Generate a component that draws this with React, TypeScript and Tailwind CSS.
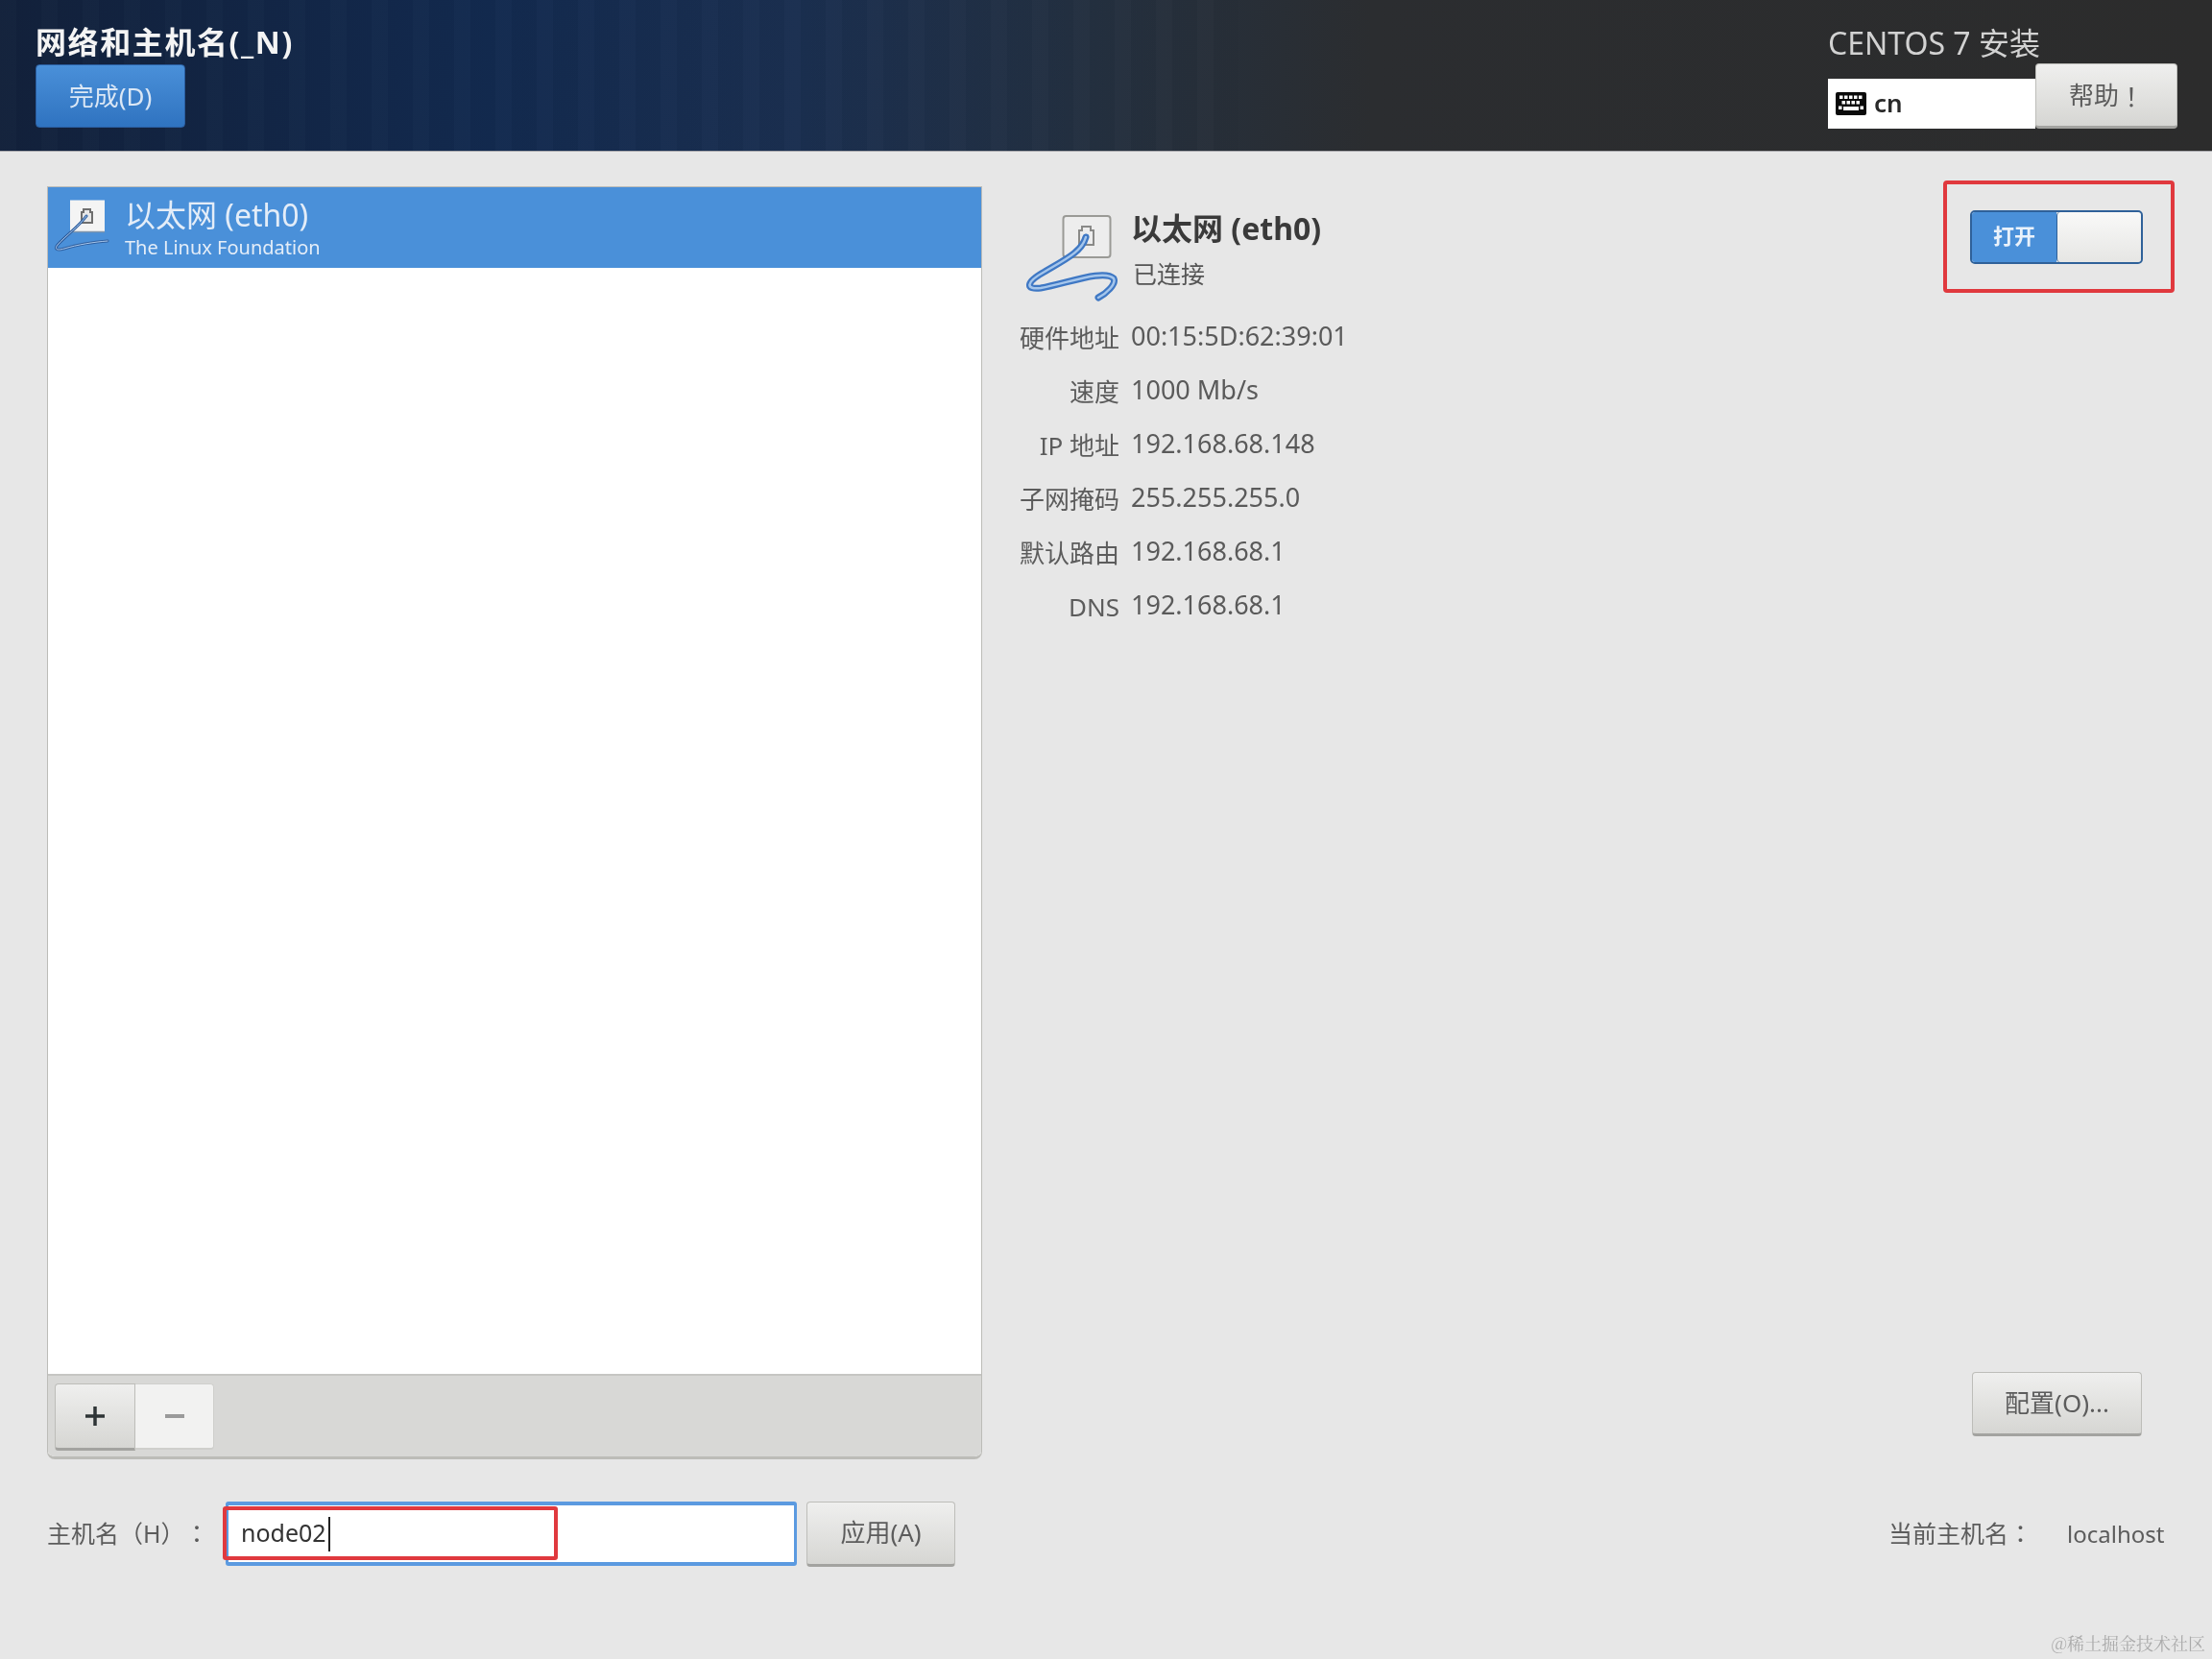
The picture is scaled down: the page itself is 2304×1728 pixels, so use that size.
import React from "react";

const font = "[font-family:'Noto_Sans','Noto_Sans_CJK_SC',sans-serif] [text-spacing-trim:space-all]";
const centered = "[font-family:'Noto_Sans_CJK_TC',sans-serif]";

function PortIcon({ large }: { large?: boolean }) {
  if (large) {
    const cable = "M69 37 C 65 52, 48 60, 26 73 C 6 84, 6 92, 22 90 C 50 85, 88 70, 98 80 C 101 86, 90 96, 82 100";
    return (
      <svg width="110" height="104" viewBox="0 0 110 104" className="mt-[16px] shrink-0">
        <rect x="45.5" y="15" width="49" height="43" rx="3" fill="#ededed" stroke="#9a9a96" strokeWidth="2" />
        <path d="M62 30 h3 v-4 h9 v4 h3 v15 h-15 z" fill="none" stroke="#8a8a88" strokeWidth="2" />
        <path d={cable} fill="none" stroke="#3f78c4" strokeWidth="7" strokeLinecap="round" />
        <path d={cable} fill="none" stroke="#a5c6ec" strokeWidth="2.5" strokeLinecap="round" />
      </svg>
    );
  }
  const cable = "M40 17 C 33 27, 18 38, 10 47 C 6 52, 10 53, 17 51 C 30 47, 48 44, 62 43";
  return (
    <svg width="76" height="60" viewBox="0 0 76 60" className="shrink-0">
      <rect x="23" y="0.5" width="36" height="33" fill="#f4f4f4" />
      <path d="M23 33.5 h36" stroke="#7f95ad" strokeWidth="1.5" />
      <path d="M35 13 h2 v-3 h7 v3 h2 v11 h-11 z" fill="#e8e8e8" stroke="#6f6f6f" strokeWidth="2" />
      <path d={cable} fill="none" stroke="#2f5f9f" strokeWidth="3" strokeLinecap="round" />
      <path d={cable} fill="none" stroke="#a9c8ec" strokeWidth="1" strokeLinecap="round" />
    </svg>
  );
}

function KeyboardIcon() {
  const top = [0, 1, 2, 3, 4];
  const mid = [0, 1, 2, 3];
  return (
    <svg width="32" height="24" viewBox="0 0 32 24" className="shrink-0">
      <rect width="32" height="24" rx="2" fill="#0a0a0a" />
      {top.map((i) => (
        <rect key={`t${i}`} x={4 + i * 5} y="3.5" width="3.5" height="3.5" fill="#fff" />
      ))}
      {mid.map((i) => (
        <rect key={`m${i}`} x={6.5 + i * 5} y="9" width="3.5" height="3.5" fill="#fff" />
      ))}
      <rect x="3" y="14.5" width="3.5" height="3.5" fill="#fff" />
      <rect x="25.5" y="14.5" width="3.5" height="3.5" fill="#fff" />
      <rect x="8" y="15" width="16" height="4" fill="#fff" />
    </svg>
  );
}

const grayBtn =
  "flex items-center justify-center rounded-[4px] border border-[#bdbdb9] border-b-[3px] border-b-[#a3a3a0] bg-gradient-to-b from-[#efefee] to-[#d6d6d3] text-[#5c5c5c]";

const rows: [string, string][] = [
  ["硬件地址", "00:15:5D:62:39:01"],
  ["速度", "1000 Mb/s"],
  ["IP 地址", "192.168.68.148"],
  ["子网掩码", "255.255.255.0"],
  ["默认路由", "192.168.68.1"],
  ["DNS", "192.168.68.1"],
];

export default function App() {
  return (
    <div className={`relative flex h-[1728px] w-[2304px] flex-col overflow-hidden bg-[#e7e7e7] blur-[0.7px] ${font}`}>
      <header className="flex h-[158px] shrink-0 justify-between border-b border-b-[#a9a9ad] bg-[repeating-linear-gradient(90deg,rgba(255,255,255,0.01)_0px,rgba(255,255,255,0.01)_17px,rgba(0,0,0,0.018)_17px,rgba(0,0,0,0.018)_43px),linear-gradient(90deg,#12213b_0%,#122a4f_22%,#1a2f50_36%,#24303f_50%,#2b2d30_62%,#2c2c2c_100%)] bg-no-repeat [background-size:1290px_100%,100%_100%] pl-[37px] pr-[36px]">
        <div className="flex flex-col">
          <div className="mt-[24px] h-[43px] text-[32px] font-bold leading-[40px] tracking-[1.6px] text-[#f4f4f4]">网络和主机名(_N)</div>
          <button className="flex h-[66px] w-[156px] items-center justify-center rounded-[4px] border border-[#2a5d9f] bg-gradient-to-b from-[#4a90d9] to-[#2f73c0] text-[26px] text-[#dbe7f5]">完成(D)</button>
        </div>
        <div className="flex w-[364px] flex-col">
          <div className="mt-[25px] h-[41px] whitespace-nowrap text-[32px] leading-[40px] text-[#d2d2d2]">CENTOS 7 安装</div>
          <div className="flex items-end">
            <div className="flex h-[52px] w-[216px] items-center gap-[8px] bg-white pl-[8px]">
              <KeyboardIcon />
              <span className="mt-[-2px] text-[26px] font-semibold leading-none text-[#2a2a2a]">cn</span>
            </div>
            <button className={`${grayBtn} h-[68px] w-[148px] pt-[1px] text-[26px]`}>帮助<span className={centered}>！</span></button>
          </div>
        </div>
      </header>

      <main className="flex flex-1 pl-[49px] pt-[36px]">
        <div className="flex w-[974px] shrink-0 flex-col">
          <div className="flex h-[1326px] flex-col overflow-hidden rounded-b-[8px] border border-[#bcbcb8] border-b-[3px] bg-white">
            <div className="flex h-[84px] shrink-0 items-center bg-[#4a90d9] pt-[2px]">
              <PortIcon />
              <div className="ml-[4px] flex flex-col pb-[1px]">
                <span className="text-[32px] leading-[41px] text-[#e4edf8]">以太网 (eth0)</span>
                <span className="text-[20px] leading-[28px] text-[#e4edf8]">The Linux Foundation</span>
              </div>
            </div>
            <div className="flex-1" />
            <div className="flex h-[86px] shrink-0 items-start border-t-2 border-t-[#c6c6c3] bg-[#d8d8d6] pl-[7px] pt-[8px]">
              <button className={`${grayBtn} h-[70px] w-[84px] rounded-r-none text-[#2e3436]`}>
                <svg width="20" height="20" viewBox="0 0 20 20"><path d="M10 0v20M0 10h20" stroke="#2e3436" strokeWidth="3.5" /></svg>
              </button>
              <button className="flex h-[69px] w-[82px] items-center justify-center rounded-r-[4px] border border-l-0 border-[#cfcfcc] border-b-[2px] bg-[#f2f2f1]">
                <svg width="20" height="6" viewBox="0 0 20 6"><path d="M0 3h20" stroke="#9a9a9a" strokeWidth="4" /></svg>
              </button>
            </div>
          </div>

          <div className="mt-[44px] flex h-[67px] items-center pr-[28px]">
            <span className="w-[186px] shrink-0 whitespace-nowrap text-[25px] text-[#5c5c5c]">主机名（H）<span className={centered}>：</span></span>
            <div className="relative flex h-[67px] w-[595px] shrink-0 items-center rounded-[3px] border-y-[4px] border-x-[3px] border-[#5b9ae0] bg-white pl-[13px]">
              <span className="mt-[-2px] text-[25px] leading-none text-[#333]">node02</span>
              <span className="ml-[2px] h-[36px] w-[2px] bg-[#222]" />
              <div className="absolute left-[-6px] top-[1px] h-[56px] w-[349px] rounded-[3px] border-[4px] border-[#e0393e]" />
            </div>
            <button className={`${grayBtn} ml-[10px] h-[68px] w-[155px] text-[26px]`}>应用(A)</button>
          </div>
        </div>

        <div className="ml-[39px] flex h-[1437px] flex-1 flex-col pr-[39px]">
          <div className="flex items-start justify-between">
            <div className="flex">
              <PortIcon large />
              <div className="ml-[6px] mt-[20px] flex flex-col">
                <span className="text-[32px] font-bold leading-[48px] text-[#3a3a3a]">以太网 (eth0)</span>
                <span className="ml-[2px] mt-[1px] text-[25px] leading-[44px] text-[#555]">已连接</span>
              </div>
            </div>
            <div className="mt-[-6px] flex h-[117px] w-[241px] items-center rounded-[4px] border-[4px] border-[#e0393e] pl-[24px]">
              <div className="flex h-[56px] w-[180px] overflow-hidden rounded-[5px] border-2 border-[#2f6199]">
                <div className="flex w-[88px] items-center justify-center bg-[#4a90d9] pb-[2px] text-[22px] font-bold text-[#eaf2fb]">打开</div>
                <div className="flex-1 rounded-[4px] border-l border-[#2f6199] bg-gradient-to-b from-[#f9f9f8] to-[#e6e6e4]" />
              </div>
            </div>
          </div>

          <div className="mt-[9px] grid grid-cols-[104px_1fr] gap-x-[12px]">
            {rows.map(([k, v]) => (
              <React.Fragment key={k}>
                <div className="h-[56px] text-right text-[26px] leading-[58px] text-[#5c5c5c]">{k}</div>
                <div className="h-[56px] text-[27px] leading-[54px] text-[#5a5a5a]">{v}</div>
              </React.Fragment>
            ))}
          </div>

          <button className={`${grayBtn} mb-[68px] mr-[34px] mt-auto h-[67px] w-[177px] self-end text-[26px]`}>配置(O)...</button>

          <div className="flex h-[67px] items-center justify-end pr-[10px] text-[25px] text-[#5c5c5c]">
            <span>当前主机名<span className={centered}>：</span></span>
            <span className="ml-[36px] w-[102px] text-[24px]">localhost</span>
          </div>
        </div>
      </main>

      <div className="absolute bottom-[6px] right-[7px] text-[18px] leading-[22px] text-[#ababab] [font-family:'Noto_Serif_CJK_SC','Noto_Sans_CJK_SC',serif]">@稀土掘金技术社区</div>
    </div>
  );
}
